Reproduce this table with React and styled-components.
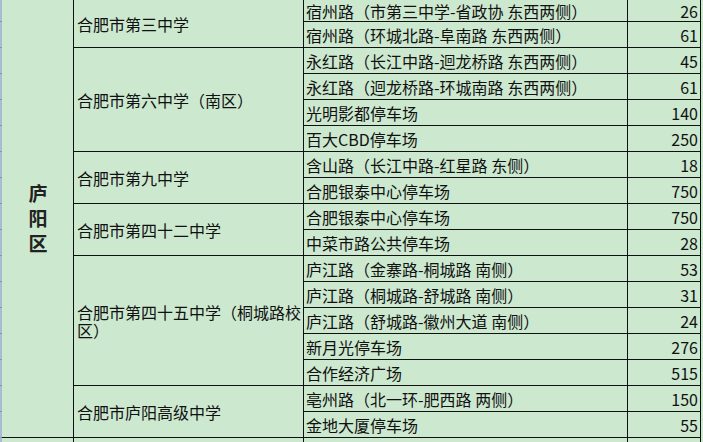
import React from 'react';
import styled, { createGlobalStyle } from 'styled-components';

const GlobalStyle = createGlobalStyle`
    html, body {
        margin: 0;
        padding: 0;
        background: #cce8cf;
        overflow: hidden;
    }
    #root {
        width: 703px;
        height: 442px;
        overflow: hidden;
    }
`;

const Page = styled.div`
    display: flex;
    width: 703px;
    height: 442px;
    overflow: hidden;
    background: #cce8cf;
    font-family: 'Noto Sans CJK SC', 'Noto Sans', sans-serif;
    color: #111;
`;

const Gutter = styled.div`
    flex: 0 0 2px;
    height: 100%;
    background: repeating-linear-gradient(
        to bottom,
        #a9bcd2 0px,
        #a9bcd2 21px,
        #7f97b4 21px,
        #7f97b4 22px,
        #a9bcd2 22px,
        #a9bcd2 26px
    );
`;

/* first row is scrolled partly out of view, so it is shorter */
const Sheet = styled.div`
    display: grid;
    grid-template-columns: 71px 229px 323px 72px;
    grid-template-rows: 21px;
    grid-auto-rows: 25px;
    gap: 1px;
    background: #111;
    border-right: 1px solid #111;
    align-self: flex-start;
`;

const Cell = styled.div`
    background: #cce8cf;
    display: flex;
    align-items: center;
    font-size: 16px;
    line-height: 18px;
    white-space: nowrap;
    overflow: hidden;
`;

const District = styled(Cell)`
    grid-row: span ${(p) => p.$span};
    justify-content: center;
    padding-top: 6px;
    & span {
        writing-mode: vertical-rl;
        font-size: 19px;
        font-weight: 700;
        letter-spacing: 6px;
        color: #222;
    }
`;

const School = styled(Cell)`
    grid-row: span ${(p) => p.$span};
    padding: 0 2px 0 3px;
    white-space: normal;
    line-height: 18px;
`;

const Road = styled(Cell)`
    padding: 0 2px;
`;

const Num = styled(Cell)`
    justify-content: flex-end;
    padding-right: 2px;
`;

const schools = [
    {
        name: '合肥市第三中学',
        spots: [
            ['宿州路（市第三中学-省政协 东西两侧）', 26],
            ['宿州路（环城北路-阜南路 东西两侧）', 61],
        ],
    },
    {
        name: '合肥市第六中学（南区）',
        spots: [
            ['永红路（长江中路-迴龙桥路 东西两侧）', 45],
            ['永红路（迴龙桥路-环城南路 东西两侧）', 61],
            ['光明影都停车场', 140],
            ['百大CBD停车场', 250],
        ],
    },
    {
        name: '合肥市第九中学',
        spots: [
            ['含山路（长江中路-红星路 东侧）', 18],
            ['合肥银泰中心停车场', 750],
        ],
    },
    {
        name: '合肥市第四十二中学',
        spots: [
            ['合肥银泰中心停车场', 750],
            ['中菜市路公共停车场', 28],
        ],
    },
    {
        name: '合肥市第四十五中学（桐城路校区）',
        spots: [
            ['庐江路（金寨路-桐城路 南侧）', 53],
            ['庐江路（桐城路-舒城路 南侧）', 31],
            ['庐江路（舒城路-徽州大道 南侧）', 24],
            ['新月光停车场', 276],
            ['合作经济广场', 515],
        ],
    },
    {
        name: '合肥市庐阳高级中学',
        spots: [
            ['亳州路（北一环-肥西路 两侧）', 150],
            ['金地大厦停车场', 55],
        ],
    },
];

const total = schools.reduce((n, s) => n + s.spots.length, 0);

const App = () => {
    return (
        <Page>
            <GlobalStyle />
            <Gutter />
            <Sheet>
                <District $span={total}>
                    <span>庐阳区</span>
                </District>
                {schools.map((s) => (
                    <React.Fragment key={s.name}>
                        <School $span={s.spots.length}>{s.name}</School>
                        {s.spots.map(([road, count], i) => (
                            <React.Fragment key={i}>
                                <Road>{road}</Road>
                                <Num>{count}</Num>
                            </React.Fragment>
                        ))}
                    </React.Fragment>
                ))}
                <Cell />
                <Cell />
                <Cell />
                <Cell />
            </Sheet>
        </Page>
    );
};

export default App;
